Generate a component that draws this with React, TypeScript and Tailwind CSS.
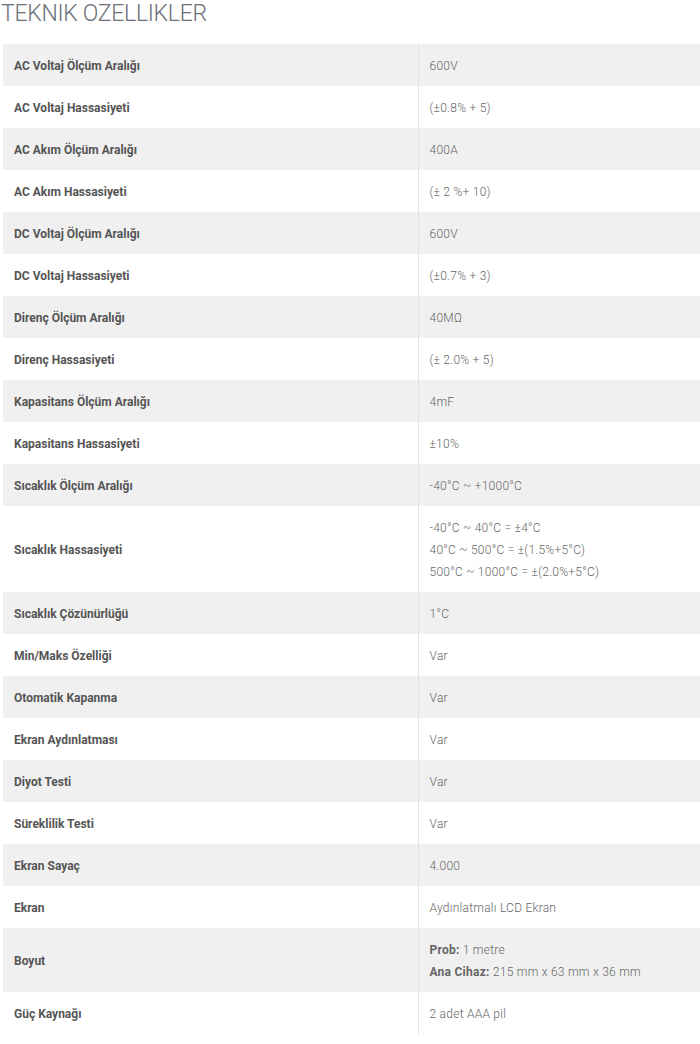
type Spec = { label: string; value: React.ReactNode };

const specs: Spec[] = [
  { label: "AC Voltaj Ölçüm Aralığı", value: "600V" },
  { label: "AC Voltaj Hassasiyeti", value: "(±0.8% + 5)" },
  { label: "AC Akım Ölçüm Aralığı", value: "400A" },
  { label: "AC Akım Hassasiyeti", value: "(± 2 %+ 10)" },
  { label: "DC Voltaj Ölçüm Aralığı", value: "600V" },
  { label: "DC Voltaj Hassasiyeti", value: "(±0.7% + 3)" },
  { label: "Direnç Ölçüm Aralığı", value: "40MΩ" },
  { label: "Direnç Hassasiyeti", value: "(± 2.0% + 5)" },
  { label: "Kapasitans Ölçüm Aralığı", value: "4mF" },
  { label: "Kapasitans Hassasiyeti", value: "±10%" },
  { label: "Sıcaklık Ölçüm Aralığı", value: "-40°C ~ +1000°C" },
  {
    label: "Sıcaklık Hassasiyeti",
    value: (
      <>
        <div>-40°C ~ 40°C = ±4°C</div>
        <div>40°C ~ 500°C = ±(1.5%+5°C)</div>
        <div>500°C ~ 1000°C = ±(2.0%+5°C)</div>
      </>
    ),
  },
  { label: "Sıcaklık Çözünürlüğü", value: "1°C" },
  { label: "Min/Maks Özelliği", value: "Var" },
  { label: "Otomatik Kapanma", value: "Var" },
  { label: "Ekran Aydınlatması", value: "Var" },
  { label: "Diyot Testi", value: "Var" },
  { label: "Süreklilik Testi", value: "Var" },
  { label: "Ekran Sayaç", value: "4.000" },
  { label: "Ekran", value: "Aydınlatmalı LCD Ekran" },
  {
    label: "Boyut",
    value: (
      <>
        <div>
          <strong className="font-bold text-[#666]">Prob:</strong> 1 metre
        </div>
        <div>
          <strong className="font-bold text-[#666]">Ana Cihaz:</strong> 215 mm x 63 mm x 36 mm
        </div>
      </>
    ),
  },
  { label: "Güç Kaynağı", value: "2 adet AAA pil" },
];

export default function App() {
  return (
    <main className="min-h-screen bg-white font-['Roboto',sans-serif]">
      {/* Başlık */}
      <h2 className="pl-[1px] pt-[1px] text-[23px] leading-[26px] font-light text-[#6b7078] tracking-[-0.3px] mb-[17px]">
        TEKNIK OZELLIKLER
      </h2>

      {/* Özellik tablosu */}
      <table className="ml-[3px] w-[697px] border-collapse text-[12px] leading-[22px]">
        <tbody>
          {specs.map((s, i) => (
            <tr key={i} className={i % 2 === 0 ? "bg-[#f0f0f0]" : "bg-white"}>
              <td className="w-[415px] px-[11px] pt-[11px] pb-[9px] align-middle font-bold text-[#555]">
                {s.label}
              </td>
              <td className="border-l border-[#e2e2e2] px-[11px] pt-[11px] pb-[9px] align-middle font-light text-[#666] tracking-[0.25px]">
                {s.value}
              </td>
            </tr>
          ))}
        </tbody>
      </table>
    </main>
  );
}
